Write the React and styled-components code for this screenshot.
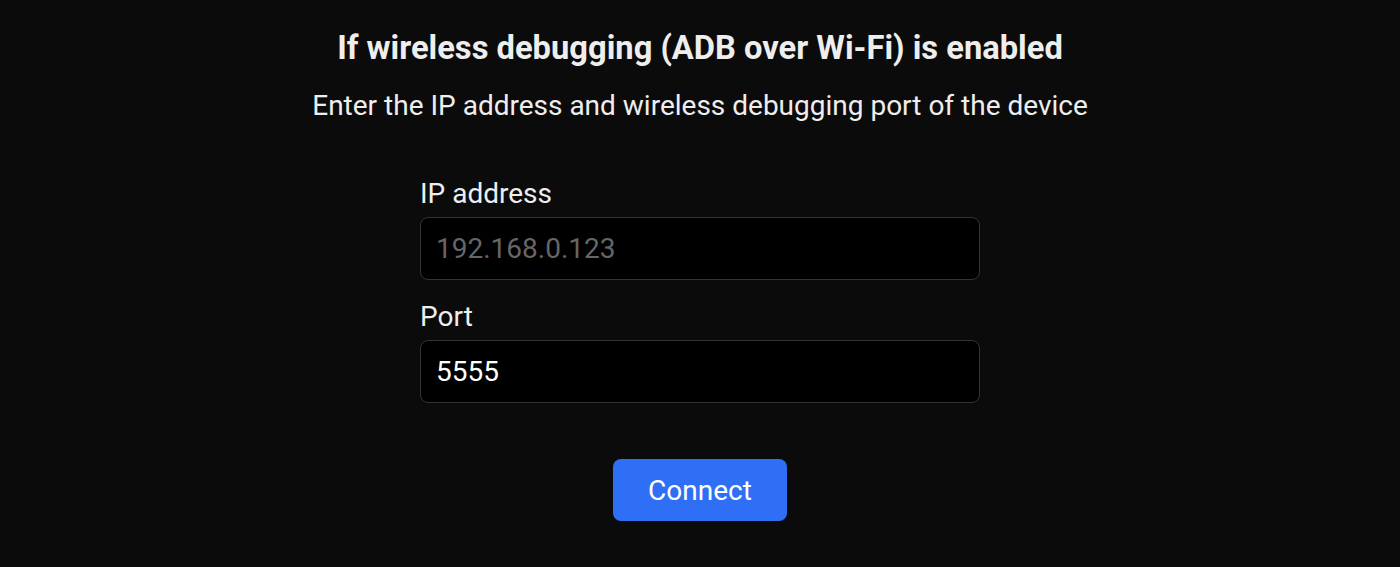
import React from 'react'
import styled, { createGlobalStyle } from 'styled-components'

const GlobalStyle = createGlobalStyle`
  html, body {
    margin: 0;
    background: #0b0b0b;
    color: #eeeeee;
    font-family: Roboto, "Liberation Sans", sans-serif;
  }
`

const Page = styled.div`
  display: flex;
  flex-direction: column;
  align-items: center;
  padding-top: 28px;
  min-height: 567px;
  box-sizing: border-box;
`

const Title = styled.h1`
  margin: 0;
  font-size: 32.7px;
  font-weight: 700;
  line-height: 40px;
  color: #eeeeee;
`

const Subtitle = styled.p`
  margin: 21px 0 0;
  font-size: 28px;
  line-height: 33px;
  color: #eeeeee;
`

const Form = styled.form`
  display: flex;
  flex-direction: column;
  width: 560px;
  margin-top: 55px;
`

const Label = styled.label`
  font-size: 28px;
  line-height: 33px;
  color: #eeeeee;
  margin-bottom: 7px;
`

const Input = styled.input`
  box-sizing: border-box;
  width: 100%;
  height: 63px;
  padding: 0 15px;
  background: #000000;
  border: 1px solid #333333;
  border-radius: 8px;
  color: #ffffff;
  font-family: Roboto, "Liberation Sans", sans-serif;
  font-size: 28px;
  outline: none;
  margin-bottom: ${props => props.gap || 0}px;

  &::placeholder {
    color: #666666;
  }
`

const Button = styled.button`
  align-self: center;
  margin-top: 56px;
  width: 174px;
  height: 62px;
  border: none;
  border-radius: 8px;
  background: #2f6ff5;
  color: #ffffff;
  font-family: Roboto, "Liberation Sans", sans-serif;
  font-size: 28px;
  cursor: pointer;
`

const App = () => (
  <>
    <GlobalStyle />
    <Page>
      <Title>If wireless debugging (ADB over Wi-Fi) is enabled</Title>
      <Subtitle>Enter the IP address and wireless debugging port of the device</Subtitle>
      <Form onSubmit={e => e.preventDefault()}>
        <Label htmlFor="ip">IP address</Label>
        <Input id="ip" placeholder="192.168.0.123" gap={20} />
        <Label htmlFor="port">Port</Label>
        <Input id="port" defaultValue="5555" />
        <Button type="submit">Connect</Button>
      </Form>
    </Page>
  </>
)

export default App
